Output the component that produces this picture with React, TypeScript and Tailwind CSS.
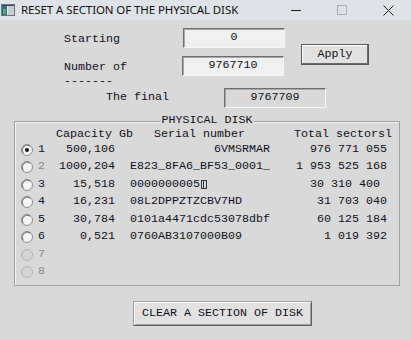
import React from "react";

const mono = "font-['Liberation_Mono',monospace] text-[11.67px] text-[#10101a]";

type Row = {
  n: number;
  cap?: string;
  serial?: React.ReactNode;
  total?: string;
  checked?: boolean;
  dimNum?: boolean;
  disabled?: boolean;
  h: number;
};

const rows: Row[] = [
  { n: 1, cap: "500,106", serial: "            6VMSRMAR", total: "976 771 055", checked: true, h: 17 },
  { n: 2, cap: "1000,204", serial: "E823_8FA6_BF53_0001_", total: "1 953 525 168", dimNum: true, h: 18 },
  {
    n: 3,
    cap: "15,518",
    serial: (
      <>
        0000000005
        <span className="inline-flex w-[6px] h-[9px] border border-[#333] justify-center align-[-1px] ml-[1px]">
          <span className="w-px h-full bg-[#333]" />
        </span>
      </>
    ),
    total: "30 310 400 ",
    h: 17,
  },
  { n: 4, cap: "16,231", serial: "08L2DPPZTZCBV7HD", total: "31 703 040", h: 18 },
  { n: 5, cap: "30,784", serial: "0101a4471cdc53078dbf", total: "60 125 184", h: 17 },
  { n: 6, cap: "0,521", serial: "0760AB3107000B09", total: "1 019 392", h: 18 },
  { n: 7, disabled: true, h: 17 },
  { n: 8, disabled: true, h: 18 },
];

function Radio({ checked, disabled }: { checked?: boolean; disabled?: boolean }) {
  return (
    <svg width="12" height="12" viewBox="0 0 12 12">
      <circle
        cx="6"
        cy="6"
        r="5.5"
        fill={disabled ? "#d6d6d6" : "#f4f4f4"}
        stroke={disabled ? "#b4b4b4" : "#8c8c8c"}
        strokeWidth="1"
      />
      <path d="M2.2 9.2 A5 5 0 0 1 9.2 2.2" fill="none" stroke={disabled ? "#c4c4c4" : "#6a6a6a"} strokeWidth="1" />
      {checked && <circle cx="6" cy="6" r="2" fill="#111" />}
    </svg>
  );
}

function Field({ value, w = "w-[102px]", bg = "bg-[#f0f0f0]" }: { value: string; w?: string; bg?: string }) {
  return (
    <div
      className={`${w} h-[20px] ${bg} border border-[#6e6e6e] border-b-[#f6f6f6] border-r-[#f6f6f6] shadow-[inset_1px_1px_0_#a8a8a8] flex items-center justify-center ${mono}`}
    >
      {value}
    </div>
  );
}

export default function App() {
  return (
    <div className="w-[411px] h-[340px] bg-[#d9d9d9] overflow-hidden">
      {/* Title bar */}
      <div className="h-[20px] bg-[#dfe3e8] flex items-center">
        <svg width="14" height="12" viewBox="0 0 14 12" className="ml-[1px]">
          <rect x="0" y="0" width="14" height="12" fill="#e8e8e8" />
          <rect x="0.5" y="0.5" width="13" height="11" fill="none" stroke="#6b7780" />
          <rect x="1" y="2" width="5" height="9" fill="#2f6f8a" />
          <rect x="2" y="5" width="3" height="5" fill="#5aa36e" />
          <rect x="7" y="2" width="6" height="9" fill="#c9ced3" />
          <rect x="1" y="1" width="12" height="1" fill="#3b4a5a" />
        </svg>
        <span className="ml-[6px] font-['Noto_Sans',sans-serif] text-[11.5px] text-[#111] tracking-[-0.1px]">
          RESET A SECTION OF THE PHYSICAL DISK
        </span>
        <div className="ml-auto flex items-center h-full">
          <div className="w-[46px] h-full flex items-center justify-center">
            <div className="w-[10px] h-px bg-[#222]" />
          </div>
          <div className="w-[46px] h-full flex items-center justify-center">
            <div className="w-[10px] h-[10px] border border-[#a9adb2]" />
          </div>
          <div className="w-[46px] h-full flex items-center justify-center">
            <svg width="11" height="11" viewBox="0 0 11 11">
              <path d="M0.5 0.5 L10.5 10.5 M10.5 0.5 L0.5 10.5" stroke="#222" strokeWidth="1" />
            </svg>
          </div>
        </div>
      </div>

      {/* Form area */}
      <div className="flex pt-[8px]">
        <div className="flex flex-col">
          <div className="flex items-center h-[20px]">
            <span className={`ml-[64px] w-[119px] pt-[3px] ${mono}`}>Starting</span>
            <Field value="0" />
          </div>
          <div className="flex items-center h-[20px] mt-[8px]">
            <span className={`ml-[64px] w-[118px] pt-[3px] ${mono}`}>Number of</span>
            <Field value="9767710" />
          </div>
        </div>
        <button
          className={`ml-[16px] mt-[16px] w-[68px] h-[21px] bg-[#e1e1e1] border border-[#5a5a5a] shadow-[inset_-1px_-1px_0_#6a6a6a,inset_1px_1px_0_#ffffff] flex items-center justify-center ${mono}`}
        >
          Apply
        </button>
      </div>
      <div className={`ml-[64px] h-[12px] leading-[12px] -mt-[1px] ${mono}`}>-------</div>
      <div className="flex items-center h-[20px] mt-[1px]">
        <span className={`ml-[106px] w-[118px] ${mono}`}>The final</span>
        <Field value="9767709" bg="bg-[#d9d9d9]" />
      </div>

      {/* Group box */}
      <div className="relative ml-[14px] w-[386px] h-[165px] mt-[13px] border border-[#a0a0a0] shadow-[inset_1px_1px_0_#f4f4f4]">
        <div className={`absolute left-1/2 -translate-x-1/2 -top-[7px] h-[11px] leading-[11px] bg-[#d9d9d9] px-[1px] ${mono}`}>
          PHYSICAL DISK
        </div>
        <div className={`flex items-center h-[12px] mt-[7px] whitespace-pre ${mono}`}>
          <span className="ml-[41px] w-[98px]">Capacity Gb</span>
          <span className="w-[140px]">Serial number</span>
          <span>Total sectorsl</span>
        </div>
        {rows.map((r) => (
          <div key={r.n} className={`flex items-center whitespace-pre ${mono}`} style={{ height: r.h }}>
            <span className="ml-[6px] flex items-center">
              <Radio checked={r.checked} disabled={r.disabled} />
            </span>
            <span className={`ml-[5px] w-[14px] ${r.dimNum || r.disabled ? "text-[#8a8a8a]" : ""}`}>{r.n}</span>
            <span className="w-[63px] text-right">{r.cap ?? ""}</span>
            <span className="ml-[15px] w-[160px]">{r.serial ?? ""}</span>
            <span className="w-[97px] text-right">{r.total ?? ""}</span>
          </div>
        ))}
      </div>

      {/* Bottom button */}
      <button
        className={`ml-[133px] mt-[15px] w-[179px] h-[25px] bg-[#e1e1e1] border border-[#a0a0a0] border-b-[#5e5e5e] border-r-[#5e5e5e] shadow-[inset_1px_1px_0_#ffffff,inset_-1px_-1px_0_#a0a0a0] flex items-center justify-center ${mono}`}
      >
        CLEAR A SECTION OF DISK
      </button>
    </div>
  );
}
